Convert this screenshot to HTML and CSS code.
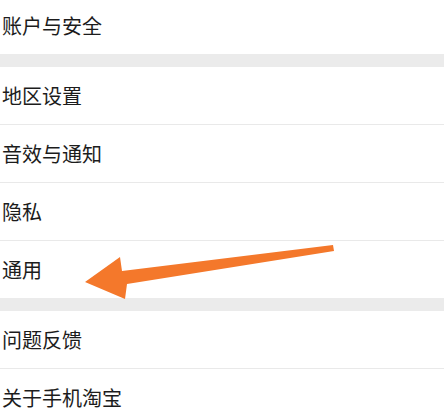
FILE: index.html
```html
<!DOCTYPE html>
<html lang="zh-CN">
<head>
    <meta charset="UTF-8">
    <meta name="viewport" content="width=device-width, initial-scale=1.0">
    <title>设置</title>
    <link rel="stylesheet" href="styles.css">
</head>
<body>
    <div class="page">
        <!-- 账户 -->
        <div class="group first">
            <div class="row">账户与安全</div>
        </div>

        <div class="group">
            <div class="row">地区设置</div>
            <div class="row">音效与通知</div>
            <div class="row">隐私</div>
            <div class="row">通用</div>
        </div>

        <div class="group">
            <div class="row">问题反馈</div>
            <div class="row">关于手机淘宝</div>
        </div>

        <!-- 箭头标注 -->
        <svg class="arrow" width="444" height="412" viewBox="0 0 444 412">
            <polygon points="85,282 120,257 122,271 333,245 334,251 127,284 125,299" fill="#f4782b"/>
        </svg>
    </div>
</body>
</html>
```

FILE: styles.css
```css
body {
    margin: 0;
    background-color: #ebebeb;
    font-family: "Noto Sans CJK SC", "Noto Sans", sans-serif;
    color: #1c1c1c;
}

.page {
    position: relative;
    height: 412px;
    overflow: hidden;
}

.group {
    background-color: #fff;
    margin-bottom: 13px;
}

.group.first {
    margin-top: -3px;
}

.row {
    height: 57px;
    display: flex;
    align-items: center;
    padding-left: 2px;
    font-size: 20px;
    line-height: 1;
}

.row + .row {
    border-top: 1px solid #e9e9e9;
}

.arrow {
    position: absolute;
    left: 0;
    top: 0;
}
```
